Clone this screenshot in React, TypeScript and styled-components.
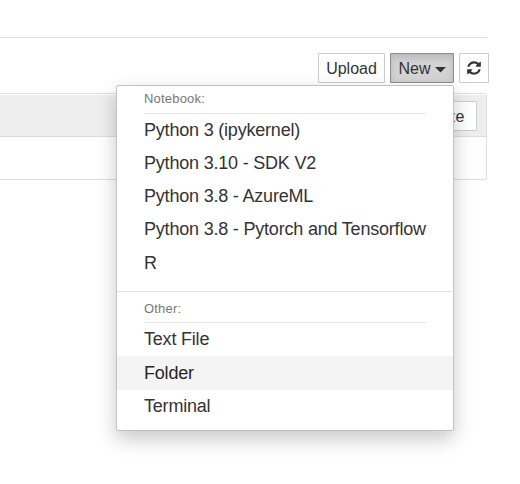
import React from "react";
import styled, { createGlobalStyle } from "styled-components";

const GlobalStyle = createGlobalStyle`
  * { box-sizing: border-box; }
  body {
    margin: 0;
    background: #fff;
    color: #333;
    font-family: "Liberation Sans", Arial, sans-serif;
    overflow: hidden;
  }
`;

const Page = styled.main`
  position: relative;
  width: 520px;
  height: 484px;
  overflow: hidden;
`;

const TabBar = styled.div`
  width: 487px;
  height: 38px;
  border-bottom: 1px solid #ddd;
`;

const Toolbar = styled.div`
  display: flex;
  justify-content: flex-end;
  gap: 5px;
  width: 489px;
  padding: 15px 0 10px;
`;

const Button = styled.button<{ $width: number; $active?: boolean }>`
  display: flex;
  align-items: center;
  justify-content: center;
  width: ${(p) => p.$width}px;
  height: 30px;
  padding: 0;
  border: 1px solid ${(p) => (p.$active ? "#8c8c8c" : "#ccc")};
  border-radius: 1px;
  background: ${(p) => (p.$active ? "#d4d4d4" : "#fff")};
  box-shadow: ${(p) => (p.$active ? "inset 0 4px 7px rgba(0, 0, 0, 0.125)" : "none")};
  color: #333;
  font: 16px/24px "Liberation Sans", Arial, sans-serif;
  white-space: nowrap;
`;

const Label = styled.span`
  padding-top: 2px;
`;

const CaretIcon = styled.svg`
  width: 11px;
  height: 6px;
  margin: 3px 0 0 4px;
  fill: #333;
`;

const FileList = styled.section`
  width: 487px;
  height: 87px;
  border: 1px solid #ddd;
  border-left: 0;
  border-radius: 0 2px 2px 0;
`;

const ListHeader = styled.header`
  display: flex;
  justify-content: flex-end;
  height: 42px;
  margin-top: 1px;
  padding: 6px 9px 0 0;
  background: #eee;
  border-bottom: 1px solid #ddd;
`;

const Menu = styled.nav`
  position: absolute;
  left: 116px;
  top: 85px;
  width: 338px;
  height: 346px;
  background: #fff;
  border: 1px solid #c2c2c2;
  border-radius: 2px;
  box-shadow: 0 8px 20px rgba(0, 0, 0, 0.22);
`;

const GroupTitle = styled.h2<{ $height: number }>`
  height: ${(p) => p.$height}px;
  margin: 0 27px;
  border-bottom: 1px solid #e5e5e5;
  color: #777;
  font-size: 13px;
  font-weight: 400;
  line-height: 25px;
  letter-spacing: 0.2px;
`;

const Items = styled.ul`
  margin: 0;
  padding: 0;
  list-style: none;
`;

const Item = styled.li<{ $hover?: boolean }>`
  height: ${(p) => (p.$hover ? 34 : 33)}px;
  padding: 0 27px;
  background: ${(p) => (p.$hover ? "#f4f4f4" : "transparent")};
  color: ${(p) => (p.$hover ? "#262626" : "#333")};
  font-size: 18px;
  line-height: ${(p) => (p.$hover ? 35 : 33)}px;
  letter-spacing: -0.2px;
  white-space: nowrap;

  &:nth-child(5) {
    height: 35px;
    line-height: 35px;
  }
`;

const Divider = styled.hr`
  height: 1px;
  margin: 10px 0 4px;
  border: 0;
  background: #e5e5e5;
`;

const kernels = [
  "Python 3 (ipykernel)",
  "Python 3.10 - SDK V2",
  "Python 3.8 - AzureML",
  "Python 3.8 - Pytorch and Tensorflow",
  "R",
];

const others = ["Text File", "Folder", "Terminal"];

const RefreshIcon = () => (
  <svg width="16" height="16" viewBox="0 0 1792 1792" fill="#333" aria-hidden="true">
    <path d="M1639 1056q0 5-1 7-64 268-268 434.5t-478 166.5q-146 0-282.5-55t-243.5-157l-129 129q-19 19-45 19t-45-19-19-45v-448q0-26 19-45t45-19h448q26 0 45 19t19 45-19 45l-137 137q71 66 161 102t187 36q134 0 250-65t186-179q11-17 53-117 8-23 30-23h192q13 0 22.5 9.5t9.5 22.5zm25-800v448q0 26-19 45t-45 19h-448q-26 0-45-19t-19-45 19-45l138-138q-148-137-349-137-134 0-250 65t-186 179q-11 17-53 117-8 23-30 23h-199q-13 0-22.5-9.5t-9.5-22.5v-7q65-268 270-434.5t480-166.5q146 0 284 55.5t245 156.5l130-129q19-19 45-19t45 19 19 45z" />
  </svg>
);

export default function App() {
  return (
    <Page>
      <GlobalStyle />
      <TabBar />
      <Toolbar>
        <Button $width={67}>
          <Label>Upload</Label>
        </Button>
        <Button $width={64} $active>
          <Label>New</Label>
          <CaretIcon viewBox="0 0 11 6" aria-hidden="true">
            <path d="M0 0H11L5.5 5.6Z" />
          </CaretIcon>
        </Button>
        <Button $width={30} aria-label="Refresh">
          <RefreshIcon />
        </Button>
      </Toolbar>
      <FileList>
        <ListHeader>
          <Button $width={84}>
            <Label>File size</Label>
          </Button>
        </ListHeader>
      </FileList>
      <Menu>
        <GroupTitle $height={28}>Notebook:</GroupTitle>
        <Items>
          {kernels.map((name) => (
            <Item key={name}>{name}</Item>
          ))}
        </Items>
        <Divider />
        <GroupTitle $height={27}>Other:</GroupTitle>
        <Items>
          {others.map((name) => (
            <Item key={name} $hover={name === "Folder"}>
              {name}
            </Item>
          ))}
        </Items>
      </Menu>
    </Page>
  );
}
